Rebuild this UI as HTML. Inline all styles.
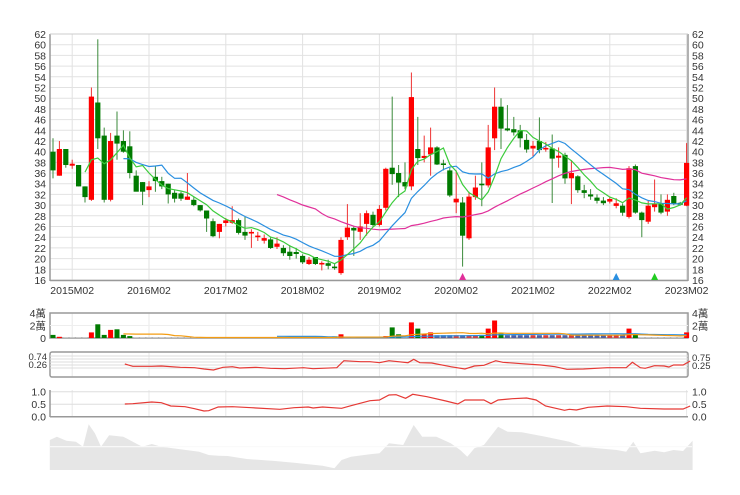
<!DOCTYPE html>
<html><head><meta charset="utf-8"><style>
html,body{margin:0;padding:0;background:#fff;}
svg{display:block;font-family:"Liberation Sans","Noto Sans CJK TC",sans-serif;}
</style></head><body>
<svg id="s" width="740" height="495" viewBox="0 0 740 495" xmlns="http://www.w3.org/2000/svg"></svg>
<script>
var D=[[40,36.5,42.5,35],[35.5,40.5,42,35.5],[40.5,37.5,40.5,37],[37.5,37.6,38.5,36.8],[37.5,33.5,37.5,33.5],[33.5,31.5,33.5,30.5],[31,50.3,52,30.8],[49.2,42.5,61,40.5],[43,31,44.5,30.5],[31,42,43.5,30.7],
[43,41.5,47.5,38.5],[42,40,44,39.8],[41,36,43.8,35],[35.5,32.5,36.5,32.8],[34.3,32.5,34.3,30],[32.8,33.5,34.5,31.5],[35.3,34.5,37.3,32.5],[34.5,33.5,35.3,33],[34,32,34,30.3],[32.3,31.2,32.8,30.5],
[32.2,31.2,32.5,30.8],[31,31.6,36,31],[31,30,31.5,29.8],[30,29,30,28.8],[29,27.5,29,25],[27,24.2,27.5,24],[25,26.5,26.5,23.8],[26.8,27,27.6,26],[26.7,27.2,29.8,26.5],[27.2,24.8,27.5,24.5],
[25,24.3,27.8,23.5],[24.7,25,25.5,22],[24,24.3,25,23.3],[23.5,23.7,24.5,22.8],[23.6,22,24,21.8],[22.2,22.8,24,21.8],[22,21,22.5,20.5],[21.3,20.5,22.5,19.8],[21.1,21,22,20],[20.5,19.3,20.8,19],
[19,19.8,20.3,18.8],[20.3,19,20.3,18.8],[18.9,19.2,19.5,17.8],[19,18.8,19.8,18],[18.5,18.2,19,17.9],[17.3,23.5,24,17],[24,25.8,30.2,23.5],[25.6,25.4,26,20.5],[25,26,28.5,23.5],[26.5,28.5,29,24.3],
[28.2,26.3,28.8,26],[26.3,29.3,30,26],[29.5,36.8,37,29],[37,35.8,50.3,33.8],[36,34.2,37.5,31.5],[34.3,33.5,38,33],[33.5,50.2,54.8,32.8],[40.5,38.8,46.5,37.5],[38.8,39.2,43,38],[39.5,40.8,44.5,35.5],
[40.8,37.6,41,37.5],[37.8,37.5,38.5,36.5],[36.5,31.8,37,31.5],[30.5,31.2,36.5,28.5],[30.5,24.3,31.5,18.5],[23.8,31.6,32.5,23.5],[31.5,33.3,35.5,31],[34,33.7,38,29.8],[33.7,40.8,45,33.3],[42.5,48.4,52,40.3],
[48.4,44.3,50,40.5],[44.2,44.1,48.7,43.8],[44.2,43.6,46.5,43],[44,42.5,45,40.8],[42.2,40.4,43.3,39.8],[40.6,41.1,42,39],[42,40.3,46.4,39.7],[40.4,40.7,41.8,40],[40.6,38.7,43.2,30.4],[39,39.1,40.8,37],
[39.4,35,39.8,34],[35,36,38.4,30.2],[35.4,32.8,35.6,32.3],[32.8,32.3,33.8,31.3],[32,31.6,33,31],[31.4,30.8,32,30.3],[30.7,30.5,31.5,30],[30.8,31,31.5,30.3],[30,30.2,31.3,29.4],[29.9,28.6,30.3,28],
[27.8,36.9,37.3,27.5],[37.3,28.6,37.6,28.4],[28.6,27.2,28.8,24],[26.9,29.9,30.8,26.5],[29.6,30.3,34.8,28.8],[30.3,28.6,32,28.3],[28.8,31,32,28],[31.7,30.3,32.3,30],[30.3,30.2,30.6,29.9],[29.9,37.9,41.6,29.8]];
var s='';
function X(k){return 53+k*6.4;}
function Y(p){return 34+(62-p)*5.348;}
for(var p=16;p<=62;p+=2){var y=Y(p).toFixed(1);s+='<line x1="50" x2="688" y1="'+y+'" y2="'+y+'" stroke="#e2e2e2"/>';
s+='<text x="46" y="'+(+y+4)+'" font-size="10.5" fill="#333" text-anchor="end">'+p+'</text>';
s+='<text x="692" y="'+(+y+4)+'" font-size="10.5" fill="#333">'+p+'</text>';}
var yrs=['2015','2016','2017','2018','2019','2020','2021','2022','2023'];
for(var i=0;i<9;i++){var x=X(3+12*i).toFixed(1);
s+='<line x1="'+x+'" x2="'+x+'" y1="34" y2="280" stroke="#e2e2e2"/>';
['313','352','390'].forEach(function(t,j){var b=[338,377,416][j];s+='<line x1="'+x+'" x2="'+x+'" y1="'+t+'" y2="'+b+'" stroke="#e8e8e8"/>';});
s+='<text x="'+x+'" y="294" font-size="10.5" fill="#333" text-anchor="middle">'+yrs[i]+'M02</text>';}
s+='<line x1="50" x2="50" y1="34" y2="281" stroke="#999" stroke-width="1.5"/><line x1="688" x2="688" y1="34" y2="281" stroke="#999" stroke-width="1.5"/><line x1="50" x2="688" y1="280.5" y2="280.5" stroke="#999" stroke-width="1.5"/><line x1="50" x2="688" y1="34" y2="34" stroke="#ccc"/>';
function ma(n,col,arr,fy){var pts=[];for(var k=n-1;k<arr.length;k++){var t=0;for(var j=k-n+1;j<=k;j++)t+=arr[j];pts.push(X(k).toFixed(1)+','+fy(t/n).toFixed(1));}
return '<polyline points="'+pts.join(' ')+'" fill="none" stroke="'+col+'" stroke-width="1.2"/>';}
var C=D.map(function(d){return d[1];});
var lines=ma(36,'#e0309a',C,Y)+ma(12,'#2a8fe0',C,Y)+ma(6,'#3ccc3c',C,Y);
var cs='';
D.forEach(function(d,k){var o=d[0],c=d[1],h=d[2],l=d[3];var up=c>=o;var col=up?'#f00':'#007a00';var wc=up?'#e33':'#3a8a3a';var x=X(k);
cs+='<line x1="'+x.toFixed(1)+'" x2="'+x.toFixed(1)+'" y1="'+Y(h).toFixed(1)+'" y2="'+Y(l).toFixed(1)+'" stroke="'+wc+'"/>';
var t=Y(Math.max(o,c)),b=Y(Math.min(o,c));if(b-t<1.5){t-=0.75;b+=0.75;}
cs+='<rect x="'+(x-2.6).toFixed(1)+'" y="'+t.toFixed(1)+'" width="5.2" height="'+(b-t).toFixed(1)+'" fill="'+col+'"/>';});
s+=cs+lines;
function tri(x,c){return '<polygon points="'+(x-3.5)+',280 '+(x+3.5)+',280 '+x+',273" fill="'+c+'"/>';}
s+=tri(X(64),'#e0309a')+tri(X(88),'#2a8fe0')+tri(X(94),'#22cc22');
var V=[];for(var k=0;k<100;k++)V.push(0.08);
var vs={0:.5,1:.2,6:.9,7:2.2,8:.5,9:1.3,10:1.4,11:.5,12:.3,44:.25,45:.6,52:.3,53:1.7,54:.6,56:2.5,57:1.5,58:.6,59:.9,67:.5,68:1.5,69:2.8,70:.7,90:1.5,91:.6,99:.9};
for(var k in vs)V[k]=vs[k];
for(var k=56;k<90;k++)if(!vs[k])V[k]=0.45;
function VY(v){return 338-v*6.25;}
s+='<rect x="50" y="313" width="638" height="25" fill="none" stroke="#999" stroke-width="1.5"/><line x1="50" x2="688" y1="325.5" y2="325.5" stroke="#eee"/>';
[['4萬',313],['2萬',325.5],['0',338]].forEach(function(a){s+='<text x="46" y="'+(a[1]+4)+'" font-size="10.5" fill="#333" text-anchor="end">'+a[0]+'</text><text x="692" y="'+(a[1]+4)+'" font-size="10.5" fill="#333">'+a[0]+'</text>';});
D.forEach(function(d,k){var up=d[1]>=d[0];var col=V[k]<0.5&&k>55&&k<90?(up?'#d04040':'#5060a0'):(up?'#f00':'#007a00');if(V[k]<0.1)col='#c8c8c8';
s+='<rect x="'+(X(k)-2.5).toFixed(1)+'" y="'+VY(V[k]).toFixed(1)+'" width="5" height="'+(338-VY(V[k])).toFixed(1)+'" fill="'+col+'"/>';});
s+=ma(36,'#2a8fe0',V,VY)+ma(12,'#f39c12',V,VY);
s+='<rect x="50" y="352" width="638" height="25" rx="2" fill="none" stroke="#999" stroke-width="1.5"/>';
[356,359,362,365,368].forEach(function(y){s+='<line x1="50" x2="688" y1="'+y+'" y2="'+y+'" stroke="#ddd"/>';});
s+='<text x="47" y="360" font-size="9.5" fill="#333" text-anchor="end">0.74</text><text x="47" y="368" font-size="9.5" fill="#333" text-anchor="end">0.26</text><text x="692" y="361" font-size="9.5" fill="#333">0.75</text><text x="692" y="369" font-size="9.5" fill="#333">0.25</text>';
function zp(a){return a.map(function(q){return (q[0]/2.108).toFixed(1)+','+(290+q[1]/3).toFixed(1);}).join(' ');}
var L3=[[263,222],[280,229],[320,229],[340,228],[380,232],[410,233],[430,237],[450,240],[470,232],[490,230],[505,234],[540,232],[570,235],[600,236],[640,233],[660,236],[710,233],[725,212],[760,215],[780,215],[800,218],[820,212],[860,218],[872,208],[885,218],[910,219],[950,230],[980,237],[1000,228],[1020,226],[1045,212],[1060,217],[1100,221],[1140,225],[1170,230],[1195,238],[1230,237],[1280,233],[1320,233],[1333,217],[1350,233],[1360,235],[1380,227],[1400,228],[1410,231],[1420,225],[1440,225],[1455,213]];
s+='<polyline points="'+zp(L3)+'" fill="none" stroke="#e53935" stroke-width="1.2"/>';
[391.7,404.2].forEach(function(y){s+='<line x1="50" x2="688" y1="'+y+'" y2="'+y+'" stroke="#ddd"/>';});
s+='<line x1="50" x2="50" y1="390" y2="417" stroke="#999" stroke-width="1.5"/><line x1="50" x2="688" y1="416.7" y2="416.7" stroke="#999" stroke-width="1.5"/>';
[['1.0',391.7],['0.5',404.2],['0.0',416.7]].forEach(function(a){s+='<text x="46" y="'+(a[1]+4)+'" font-size="10.5" fill="#333" text-anchor="end">'+a[0]+'</text><text x="692" y="'+(a[1]+4)+'" font-size="10.5" fill="#333">'+a[0]+'</text>';});
var L4=[[263,342],[280,341],[320,336],[340,338],[360,348],[390,350],[410,356],[430,363],[440,362],[460,351],[490,350],[530,353],[590,358],[620,353],[650,351],[660,354],[680,351],[720,355],[740,347],[780,332],[800,330],[820,315],[835,314],[855,325],[870,313],[900,320],[940,333],[965,342],[980,330],[1020,330],[1035,341],[1050,330],[1080,326],[1110,324],[1130,330],[1150,348],[1190,361],[1200,358],[1215,360],[1240,352],[1280,348],[1320,350],[1350,355],[1400,357],[1440,357],[1455,348]];
s+='<polyline points="'+zp(L4)+'" fill="none" stroke="#e53935" stroke-width="1.2"/>';
var A=[[105,450],[120,440],[140,452],[160,455],[175,470],[187,403],[200,430],[213,470],[230,436],[260,440],[280,455],[300,470],[320,462],[340,470],[380,478],[420,485],[440,495],[460,497],[480,498],[520,507],[580,513],[620,518],[680,527],[705,535],[720,510],[740,500],[780,493],[800,490],[820,460],[850,465],[872,405],[890,440],[920,440],[950,460],[970,480],[985,500],[1000,475],[1020,465],[1050,410],[1070,425],[1100,427],[1150,440],[1200,455],[1230,470],[1260,475],[1300,480],[1320,485],[1335,455],[1350,490],[1380,482],[1400,487],[1420,480],[1440,483],[1460,452],[1460,540],[105,540]];
s+='<polygon points="'+zp(A)+'" fill="#e6e6e6"/><line x1="50" x2="692" y1="446.7" y2="446.7" stroke="#fafafa" stroke-width="1.2"/>';
document.getElementById('s').innerHTML=s;
</script>
</body></html>
